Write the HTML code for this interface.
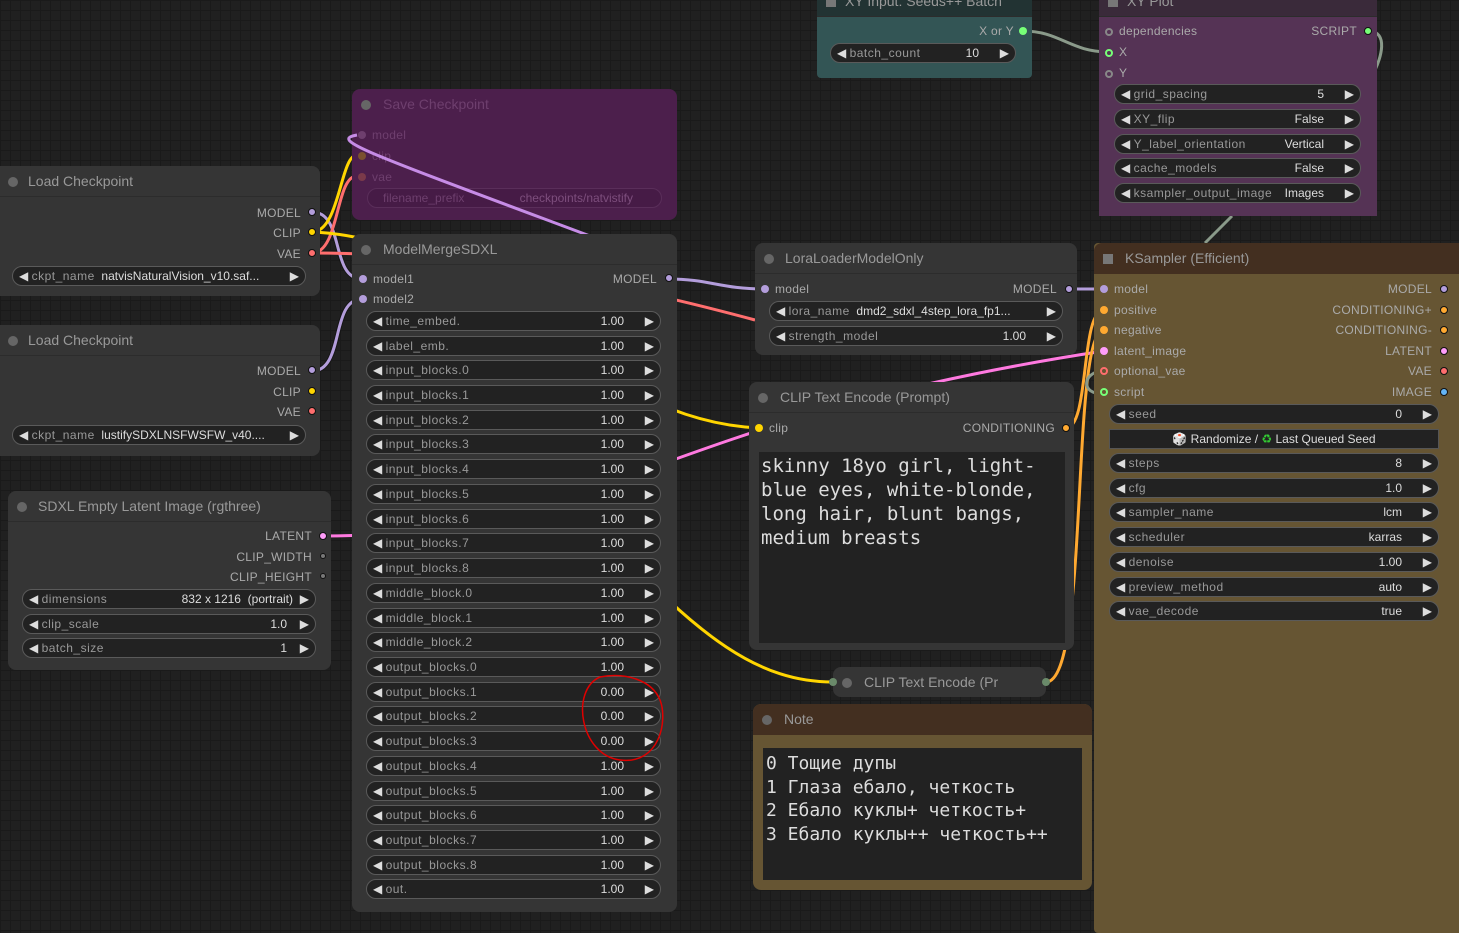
<!DOCTYPE html>
<html><head><meta charset="utf-8"><style>
*{box-sizing:border-box;margin:0;padding:0}
body{width:1459px;height:918px;overflow:hidden;position:relative;font-family:"Liberation Sans",sans-serif;
background-color:#202020;
background-image:linear-gradient(#1a1a1a 1px,transparent 1px),linear-gradient(90deg,#1a1a1a 1px,transparent 1px),linear-gradient(#161616 1px,transparent 1px),linear-gradient(90deg,#161616 1px,transparent 1px);
background-size:10px 10px,10px 10px,100px 100px,100px 100px;}
.n{position:absolute;background:#353535;border-radius:8px;}
.t{position:absolute;left:0;right:0;top:0;height:31px;border-bottom:1px solid #2c2c2c;border-radius:8px 8px 0 0;color:#999;font-size:14px;line-height:31px;padding-left:28px;white-space:nowrap;overflow:hidden}
.t:before{content:"";position:absolute;left:9px;top:11px;width:10px;height:10px;border-radius:50%;background:#666}
.t.sq:before{border-radius:0;background:#777}
.t.lc:before{left:18px}
.s{position:absolute;font-size:12px;color:#aaa;white-space:nowrap;line-height:14px;letter-spacing:.3px}
.d{position:absolute;width:8px;height:8px;border-radius:50%;border:1px solid #111}
.w{position:absolute;height:20px;background:#222;border:1px solid #5a5a5a;border-radius:10px;font-size:12px;color:#999;line-height:18px;white-space:nowrap;overflow:hidden}
.w .l{position:absolute;left:6px;top:0;color:#ddd}
.w .l b{font-weight:normal;color:#999;letter-spacing:.5px}
.w .v{position:absolute;right:22px;top:0;color:#ddd}
.w .r{position:absolute;right:6px;top:0;color:#ddd}
.mono{font-family:"DejaVu Sans Mono","Liberation Mono",monospace;color:#ddd}
</style></head><body>

<svg width="1459" height="918" style="position:absolute;left:0;top:0" fill="none" stroke-width="3">
<g stroke="#111" stroke-width="5" opacity=".6">
<path d="M312 212 C345 212,330 279,362 279"/>
<path d="M312 371 C345 371,330 299,362 299"/>
</g>
<path d="M312 212 C345 212,330 279,362 279" stroke="#b39ddb"/>
<path d="M312 371 C345 371,330 299,362 299" stroke="#b39ddb"/>
<path d="M312 232 C340 232,340 155,357 155" stroke="#ffd500"/>
<path d="M312 253 C340 253,335 176,357 176" stroke="#ff6e6e"/>
<path d="M312 232 C500 240,580 420,759 428" stroke="#ffd500"/>
<path d="M312 253 C500 253,680 300,755 320" stroke="#ff6e6e"/>
<path d="M668 279 C710 279,720 289,765 289" stroke="#b39ddb"/>
<path d="M1069 289 L1104 289" stroke="#b39ddb"/>
<path d="M322 536 C600 536,650 420,1104 351" stroke="#ff79e0"/>
<path d="M600 530 C700 640,760 682,833 682" stroke="#ffd500"/>
<path d="M1046 682 C1090 682,1070 330,1104 330" stroke="#ffa931"/>
<path d="M1066 428 C1090 428,1080 310,1104 310" stroke="#ffa931"/>
<path d="M1023 31 C1060 31,1070 52,1109 52" stroke="#8a9a8a"/>
<path d="M1368 31 C1390 31,1380 60,1375 70" stroke="#8a9a8a"/>
<path d="M1205 243 L1232 216" stroke="#8a9a8a"/>
<path d="M1104 371 C1080 371,1080 400,1110 392" stroke="#8a9a8a"/>
</svg>

<!-- Load Checkpoint 1 -->
<div class="n" style="left:-10px;top:166px;width:330px;height:130px">
<div class="t lc" style="padding-left:38px">Load Checkpoint</div>
<div class="s" style="right:19px;top:40px">MODEL</div><div class="d" style="right:4px;top:42px;background:#b39ddb"></div>
<div class="s" style="right:19px;top:60px">CLIP</div><div class="d" style="right:4px;top:62px;background:#ffd500"></div>
<div class="s" style="right:19px;top:81px">VAE</div><div class="d" style="right:4px;top:83px;background:#ff6e6e"></div>
<div class="w" style="left:22px;top:100px;width:294px"><span class="l">◀ <b>ckpt_name</b>&nbsp; natvisNaturalVision_v10.saf...</span><span class="r">▶</span></div>
</div>
<!-- Load Checkpoint 2 -->
<div class="n" style="left:-10px;top:325px;width:330px;height:131px">
<div class="t lc" style="padding-left:38px">Load Checkpoint</div>
<div class="s" style="right:19px;top:39px">MODEL</div><div class="d" style="right:4px;top:41px;background:#b39ddb"></div>
<div class="s" style="right:19px;top:60px">CLIP</div><div class="d" style="right:4px;top:62px;background:#ffd500"></div>
<div class="s" style="right:19px;top:80px">VAE</div><div class="d" style="right:4px;top:82px;background:#ff6e6e"></div>
<div class="w" style="left:22px;top:100px;width:294px"><span class="l">◀ <b>ckpt_name</b>&nbsp; lustifySDXLNSFWSFW_v40....</span><span class="r">▶</span></div>
</div>
<!-- SDXL Empty Latent -->
<div class="n" style="left:8px;top:491px;width:323px;height:179px">
<div class="t" style="padding-left:30px">SDXL Empty Latent Image (rgthree)</div>
<div class="s" style="right:19px;top:38px">LATENT</div><div class="d" style="right:4px;top:41px;background:#ff9cf9"></div>
<div class="s" style="right:19px;top:59px">CLIP_WIDTH</div><div class="d" style="right:5px;top:62px;background:#777;width:6px;height:6px"></div>
<div class="s" style="right:19px;top:79px">CLIP_HEIGHT</div><div class="d" style="right:5px;top:82px;background:#777;width:6px;height:6px"></div>
<div class="w" style="left:14px;top:98px;width:294px"><span class="l">◀ <b>dimensions</b></span><span class="v">832 x 1216 &nbsp;(portrait)</span><span class="r">▶</span></div>
<div class="w" style="left:14px;top:123px;width:294px"><span class="l">◀ <b>clip_scale</b></span><span class="v" style="right:28px">1.0</span><span class="r">▶</span></div>
<div class="w" style="left:14px;top:147px;width:294px"><span class="l">◀ <b>batch_size</b></span><span class="v" style="right:28px">1</span><span class="r">▶</span></div>
</div>

<!-- Save Checkpoint -->
<div class="n" style="left:352px;top:89px;width:325px;height:131px;background:#4c1f4c">
<div class="t" style="color:#6e3f6e;border-bottom:none;padding-left:31px">Save Checkpoint</div>
<div class="d" style="left:6px;top:42px;background:#6e3f6e;border:none"></div><div class="s" style="left:20px;top:39px;color:#6e3f6e">model</div>
<div class="d" style="left:6px;top:63px;background:#7a5030;border:none"></div><div class="s" style="left:20px;top:60px;color:#6e3f6e">clip</div>
<div class="d" style="left:6px;top:84px;background:#7a3a4a;border:none"></div><div class="s" style="left:20px;top:81px;color:#6e3f6e">vae</div>
<div class="w" style="left:15px;top:99px;width:295px;background:#461b46;border-color:#5a2e5a;color:#6e3f6e"><span class="l" style="left:15px;color:#6e3f6e">filename_prefix</span><span class="v" style="right:28px;color:#7d4e7d">checkpoints/natvistify</span></div>
</div>
<svg width="1459" height="918" style="position:absolute;left:0;top:0" fill="none"><path d="M357 135 C330 140,360 150,590 236" stroke="#c68ce6" stroke-width="3"/></svg>

<!-- ModelMergeSDXL -->
<div class="n" style="left:352px;top:234px;width:325px;height:678px">
<div class="t" style="padding-left:31px">ModelMergeSDXL</div>
<div class="d" style="left:7px;top:41px;background:#b39ddb;border:none"></div><div class="s" style="left:21px;top:38px">model1</div>
<div class="d" style="left:7px;top:61px;background:#b39ddb;border:none"></div><div class="s" style="left:21px;top:58px">model2</div>
<div class="s" style="right:20px;top:38px">MODEL</div><div class="d" style="right:4px;top:40px;background:#b39ddb"></div>
<div class="w" style="left:14px;top:77px;width:295px"><span class="l">◀ <b>time_embed.</b></span><span class="v" style="right:36px">1.00</span><span class="r">▶</span></div>
<div class="w" style="left:14px;top:102px;width:295px"><span class="l">◀ <b>label_emb.</b></span><span class="v" style="right:36px">1.00</span><span class="r">▶</span></div>
<div class="w" style="left:14px;top:126px;width:295px"><span class="l">◀ <b>input_blocks.0</b></span><span class="v" style="right:36px">1.00</span><span class="r">▶</span></div>
<div class="w" style="left:14px;top:151px;width:295px"><span class="l">◀ <b>input_blocks.1</b></span><span class="v" style="right:36px">1.00</span><span class="r">▶</span></div>
<div class="w" style="left:14px;top:176px;width:295px"><span class="l">◀ <b>input_blocks.2</b></span><span class="v" style="right:36px">1.00</span><span class="r">▶</span></div>
<div class="w" style="left:14px;top:200px;width:295px"><span class="l">◀ <b>input_blocks.3</b></span><span class="v" style="right:36px">1.00</span><span class="r">▶</span></div>
<div class="w" style="left:14px;top:225px;width:295px"><span class="l">◀ <b>input_blocks.4</b></span><span class="v" style="right:36px">1.00</span><span class="r">▶</span></div>
<div class="w" style="left:14px;top:250px;width:295px"><span class="l">◀ <b>input_blocks.5</b></span><span class="v" style="right:36px">1.00</span><span class="r">▶</span></div>
<div class="w" style="left:14px;top:275px;width:295px"><span class="l">◀ <b>input_blocks.6</b></span><span class="v" style="right:36px">1.00</span><span class="r">▶</span></div>
<div class="w" style="left:14px;top:299px;width:295px"><span class="l">◀ <b>input_blocks.7</b></span><span class="v" style="right:36px">1.00</span><span class="r">▶</span></div>
<div class="w" style="left:14px;top:324px;width:295px"><span class="l">◀ <b>input_blocks.8</b></span><span class="v" style="right:36px">1.00</span><span class="r">▶</span></div>
<div class="w" style="left:14px;top:349px;width:295px"><span class="l">◀ <b>middle_block.0</b></span><span class="v" style="right:36px">1.00</span><span class="r">▶</span></div>
<div class="w" style="left:14px;top:374px;width:295px"><span class="l">◀ <b>middle_block.1</b></span><span class="v" style="right:36px">1.00</span><span class="r">▶</span></div>
<div class="w" style="left:14px;top:398px;width:295px"><span class="l">◀ <b>middle_block.2</b></span><span class="v" style="right:36px">1.00</span><span class="r">▶</span></div>
<div class="w" style="left:14px;top:423px;width:295px"><span class="l">◀ <b>output_blocks.0</b></span><span class="v" style="right:36px">1.00</span><span class="r">▶</span></div>
<div class="w" style="left:14px;top:448px;width:295px"><span class="l">◀ <b>output_blocks.1</b></span><span class="v" style="right:36px">0.00</span><span class="r">▶</span></div>
<div class="w" style="left:14px;top:472px;width:295px"><span class="l">◀ <b>output_blocks.2</b></span><span class="v" style="right:36px">0.00</span><span class="r">▶</span></div>
<div class="w" style="left:14px;top:497px;width:295px"><span class="l">◀ <b>output_blocks.3</b></span><span class="v" style="right:36px">0.00</span><span class="r">▶</span></div>
<div class="w" style="left:14px;top:522px;width:295px"><span class="l">◀ <b>output_blocks.4</b></span><span class="v" style="right:36px">1.00</span><span class="r">▶</span></div>
<div class="w" style="left:14px;top:547px;width:295px"><span class="l">◀ <b>output_blocks.5</b></span><span class="v" style="right:36px">1.00</span><span class="r">▶</span></div>
<div class="w" style="left:14px;top:571px;width:295px"><span class="l">◀ <b>output_blocks.6</b></span><span class="v" style="right:36px">1.00</span><span class="r">▶</span></div>
<div class="w" style="left:14px;top:596px;width:295px"><span class="l">◀ <b>output_blocks.7</b></span><span class="v" style="right:36px">1.00</span><span class="r">▶</span></div>
<div class="w" style="left:14px;top:621px;width:295px"><span class="l">◀ <b>output_blocks.8</b></span><span class="v" style="right:36px">1.00</span><span class="r">▶</span></div>
<div class="w" style="left:14px;top:645px;width:295px"><span class="l">◀ <b>out.</b></span><span class="v" style="right:36px">1.00</span><span class="r">▶</span></div>
</div>
<svg width="1459" height="918" style="position:absolute;left:0;top:0" fill="none"><path d="M600 677 C570 690,580 755,620 760 C660 765,668 720,660 700 C652 680,625 672,600 677" stroke="#e00000" stroke-width="1.5"/></svg>

<!-- XY Input -->
<div class="n" style="left:817px;top:-14px;width:215px;height:92px;background:#335555;border-radius:0 0 4px 4px">
<div class="t sq" style="background:#233;height:31px;color:#999">XY Input: Seeds++ Batch</div>
<div class="s" style="right:18px;top:38px">X or Y</div><div class="d" style="right:5px;top:41px;background:#7f7;border:none"></div>
<div class="w" style="left:13px;top:57px;width:186px"><span class="l">◀ <b>batch_count</b></span><span class="v" style="right:36px">10</span><span class="r">▶</span></div>
</div>
<!-- XY Plot -->
<div class="n" style="left:1099px;top:-14px;width:278px;height:230px;background:#553355;border-radius:0">
<div class="t sq" style="background:#3a2a3a;height:31px;border-radius:0">XY Plot</div>
<div class="d" style="left:6px;top:42px;width:8px;height:8px;border:2px solid #888;background:transparent"></div><div class="s" style="left:20px;top:38px">dependencies</div>
<div class="d" style="left:6px;top:63px;width:8px;height:8px;border:2px solid #7f7;background:transparent"></div><div class="s" style="left:20px;top:59px">X</div>
<div class="d" style="left:6px;top:84px;width:8px;height:8px;border:2px solid #888;background:transparent"></div><div class="s" style="left:20px;top:80px">Y</div>
<div class="s" style="right:20px;top:38px">SCRIPT</div><div class="d" style="right:5px;top:41px;background:#7f7"></div>
<div class="w" style="left:15px;top:98px;width:247px"><span class="l">◀ <b>grid_spacing</b></span><span class="v" style="right:36px">5</span><span class="r">▶</span></div>
<div class="w" style="left:15px;top:123px;width:247px"><span class="l">◀ <b>XY_flip</b></span><span class="v" style="right:36px">False</span><span class="r">▶</span></div>
<div class="w" style="left:15px;top:148px;width:247px"><span class="l">◀ <b>Y_label_orientation</b></span><span class="v" style="right:36px">Vertical</span><span class="r">▶</span></div>
<div class="w" style="left:15px;top:172px;width:247px"><span class="l">◀ <b>cache_models</b></span><span class="v" style="right:36px">False</span><span class="r">▶</span></div>
<div class="w" style="left:15px;top:197px;width:247px"><span class="l">◀ <b>ksampler_output_image</b></span><span class="v" style="right:36px">Images</span><span class="r">▶</span></div>
</div>

<!-- Lora -->
<div class="n" style="left:755px;top:243px;width:322px;height:112px">
<div class="t" style="padding-left:30px">LoraLoaderModelOnly</div>
<div class="d" style="left:6px;top:42px;background:#b39ddb;border:none"></div><div class="s" style="left:20px;top:39px">model</div>
<div class="s" style="right:20px;top:39px">MODEL</div><div class="d" style="right:4px;top:42px;background:#b39ddb"></div>
<div class="w" style="left:14px;top:58px;width:294px"><span class="l">◀ <b>lora_name</b>&nbsp; dmd2_sdxl_4step_lora_fp1...</span><span class="r">▶</span></div>
<div class="w" style="left:14px;top:83px;width:294px"><span class="l">◀ <b>strength_model</b></span><span class="v" style="right:36px">1.00</span><span class="r">▶</span></div>
</div>

<!-- CLIP Text Encode -->
<div class="n" style="left:749px;top:382px;width:325px;height:268px">
<div class="t" style="padding-left:31px">CLIP Text Encode (Prompt)</div>
<div class="d" style="left:6px;top:42px;background:#ffd500;border:none"></div><div class="s" style="left:20px;top:39px">clip</div>
<div class="s" style="right:19px;top:39px">CONDITIONING</div><div class="d" style="right:4px;top:42px;background:#ffa931"></div>
<div class="mono" style="position:absolute;left:10px;top:70px;width:306px;height:191px;background:#222;font-size:19px;line-height:24px;padding:2px 2px;white-space:pre">skinny 18yo girl, light-
blue eyes, white-blonde,
long hair, blunt bangs,
medium breasts</div>
</div>
<!-- collapsed -->
<div class="n" style="left:833px;top:667px;width:213px;height:30px;border-radius:8px">
<div class="t" style="border:none;padding-left:31px;height:30px;line-height:30px">CLIP Text Encode (Pr</div>
<div class="d" style="left:-4px;top:11px;background:#6a8a6a;border:none"></div>
<div class="d" style="right:-4px;top:11px;background:#6a8a6a;border:none"></div>
</div>

<!-- Note -->
<div class="n" style="left:753px;top:704px;width:339px;height:186px;background:#665533">
<div class="t" style="background:#432f20;border:none;padding-left:31px">Note</div>
<div class="mono" style="position:absolute;left:10px;top:44px;width:319px;height:132px;background:#222;font-size:18px;line-height:23.5px;padding:4px 3px;white-space:pre">0 Тощие дупы
1 Глаза ебало, четкость
2 Ебало куклы+ четкость+
3 Ебало куклы++ четкость++</div>
</div>

<!-- KSampler -->
<div class="n" style="left:1094px;top:243px;width:380px;height:690px;background:#665533;border-radius:4px">
<div class="t sq" style="background:#432f20;border:none;height:31px;padding-left:31px">KSampler (Efficient)</div>
<div class="d" style="left:6px;top:42px;background:#b39ddb;border:none"></div><div class="s" style="left:20px;top:39px">model</div>
<div class="d" style="left:6px;top:63px;background:#ffa931;border:none"></div><div class="s" style="left:20px;top:60px">positive</div>
<div class="d" style="left:6px;top:83px;background:#ffa931;border:none"></div><div class="s" style="left:20px;top:80px">negative</div>
<div class="d" style="left:6px;top:104px;background:#ff9cf9;border:none"></div><div class="s" style="left:20px;top:101px">latent_image</div>
<div class="d" style="left:6px;top:124px;border:2px solid #ff6e6e;background:transparent"></div><div class="s" style="left:20px;top:121px">optional_vae</div>
<div class="d" style="left:6px;top:145px;border:2px solid #7f7;background:transparent"></div><div class="s" style="left:20px;top:142px">script</div>
<div class="s" style="right:42px;top:39px">MODEL</div><div class="d" style="right:26px;top:42px;background:#b39ddb"></div>
<div class="s" style="right:42px;top:60px">CONDITIONING+</div><div class="d" style="right:26px;top:63px;background:#ffa931"></div>
<div class="s" style="right:42px;top:80px">CONDITIONING-</div><div class="d" style="right:26px;top:83px;background:#ffa931"></div>
<div class="s" style="right:42px;top:101px">LATENT</div><div class="d" style="right:26px;top:104px;background:#ff9cf9"></div>
<div class="s" style="right:42px;top:121px">VAE</div><div class="d" style="right:26px;top:124px;background:#ff6e6e"></div>
<div class="s" style="right:42px;top:142px">IMAGE</div><div class="d" style="right:26px;top:145px;background:#64b5f6"></div>
<div class="w" style="left:15px;top:161px;width:330px"><span class="l">◀ <b>seed</b></span><span class="v" style="right:36px">0</span><span class="r">▶</span></div>
<div style="position:absolute;left:15px;top:186px;width:330px;height:20px;background:#222;border:1px solid #555;color:#ddd;font-size:12px;line-height:18px;text-align:center">🎲 Randomize / <span style="color:#3c3">♻</span> Last Queued Seed</div>
<div class="w" style="left:15px;top:210px;width:330px"><span class="l">◀ <b>steps</b></span><span class="v" style="right:36px">8</span><span class="r">▶</span></div>
<div class="w" style="left:15px;top:235px;width:330px"><span class="l">◀ <b>cfg</b></span><span class="v" style="right:36px">1.0</span><span class="r">▶</span></div>
<div class="w" style="left:15px;top:259px;width:330px"><span class="l">◀ <b>sampler_name</b></span><span class="v" style="right:36px">lcm</span><span class="r">▶</span></div>
<div class="w" style="left:15px;top:284px;width:330px"><span class="l">◀ <b>scheduler</b></span><span class="v" style="right:36px">karras</span><span class="r">▶</span></div>
<div class="w" style="left:15px;top:309px;width:330px"><span class="l">◀ <b>denoise</b></span><span class="v" style="right:36px">1.00</span><span class="r">▶</span></div>
<div class="w" style="left:15px;top:334px;width:330px"><span class="l">◀ <b>preview_method</b></span><span class="v" style="right:36px">auto</span><span class="r">▶</span></div>
<div class="w" style="left:15px;top:358px;width:330px"><span class="l">◀ <b>vae_decode</b></span><span class="v" style="right:36px">true</span><span class="r">▶</span></div>
</div>
</body></html>
